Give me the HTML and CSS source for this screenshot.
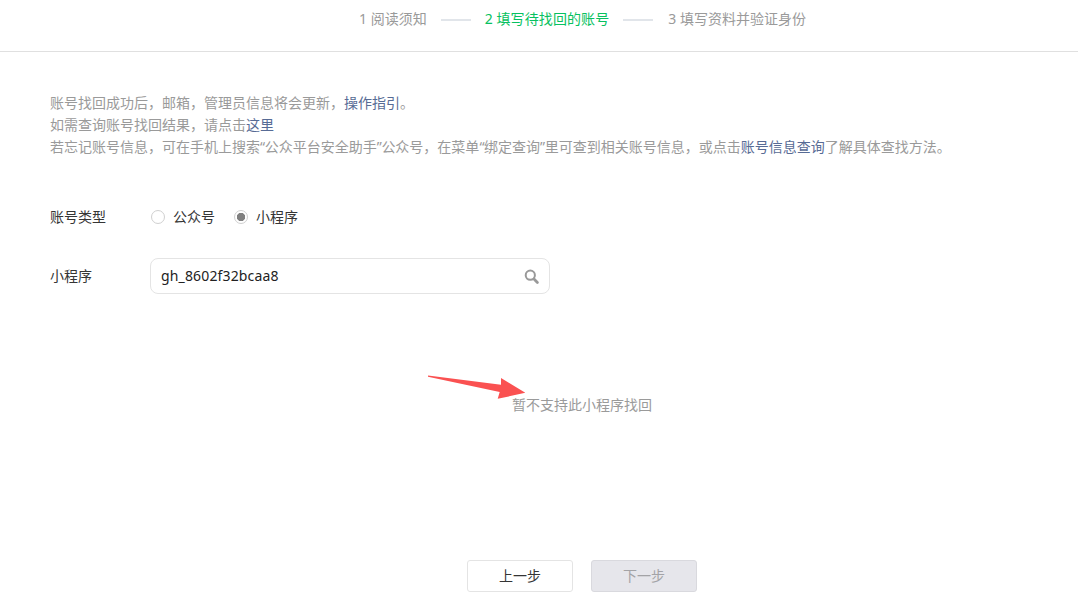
FILE: index.html
```html
<!DOCTYPE html>
<html lang="zh-CN">
<head>
<meta charset="utf-8">
<title>找回账号</title>
<link rel="stylesheet" href="styles.css">
</head>
<body>
<div class="steps">
  <span class="step">1 阅读须知</span>
  <span class="step-line"></span>
  <span class="step active">2 填写待找回的账号</span>
  <span class="step-line"></span>
  <span class="step">3 填写资料并验证身份</span>
</div>
<div class="content">
  <div class="tips">
    <p>账号找回成功后，邮箱，管理员信息将会更新，<a href="#">操作指引</a>。</p>
    <p>如需查询账号找回结果，请点击<a href="#">这里</a></p>
    <p>若忘记账号信息，可在手机上搜索<span class="quote">“</span>公众平台安全助手<span class="quote">”</span>公众号，在菜单<span class="quote">“</span>绑定查询<span class="quote">”</span>里可查到相关账号信息，或点击<a href="#">账号信息查询</a>了解具体查找方法。</p>
  </div>
  <form>
    <div class="form-row type-row">
      <span class="form-label">账号类型</span>
      <label class="radio"><input type="radio" name="type">公众号</label>
      <label class="radio"><input type="radio" name="type" checked>小程序</label>
    </div>
    <div class="form-row">
      <label class="form-label" for="account">小程序</label>
      <div class="search-box">
        <input type="text" id="account" value="gh_8602f32bcaa8">
        <svg class="search-icon" width="16" height="16" viewBox="0 0 16 16">
          <circle cx="6.3" cy="6.2" r="4.6" fill="none" stroke="#999" stroke-width="2"/>
          <path d="M10 10L13.4 13.4" stroke="#999" stroke-width="2.8" stroke-linecap="round"/>
        </svg>
      </div>
    </div>
    <div class="result">
      <span>暂不支持此小程序找回</span>
      <svg class="arrow" width="100" height="26" viewBox="0 0 100 26">
        <path d="M1 0.5L74 9.8L74 3L98.3 17.8L70.7 23.8L72.7 17L1 1.8Z" fill="#fa5151"/>
      </svg>
    </div>
    <div class="buttons">
      <button type="button" class="btn">上一步</button>
      <button type="button" class="btn btn-disabled" disabled>下一步</button>
    </div>
  </form>
</div>
</body>
</html>
```

FILE: styles.css
```css
body {
  margin: 0;
  background: #fff;
  color: #353535;
  font-family: "Noto Sans", "Noto Sans CJK SC", sans-serif;
  font-size: 14px;
  line-height: 22px;
  overflow: hidden;
}

.steps {
  display: flex;
  align-items: center;
  gap: 14px;
  box-sizing: border-box;
  height: 52px;
  padding: 0 0 12px 359px;
  border-bottom: 1px solid #e0e0e0;
  white-space: nowrap;
}

.step {
  padding-bottom: 2px;
  color: #9a9a9a;
}

.step.active {
  letter-spacing: 0.1px;
  color: #07c160;
}

.step-line {
  width: 30px;
  height: 2px;
  background: #e1e5ea;
}

.step-line + .step:last-child {
  margin-left: 1px;
}

.content {
  padding: 40px 50px 0;
}

.tips {
  color: #9a9a9a;
  white-space: nowrap;
}

.tips p {
  margin: 0;
}

.tips a {
  color: #576b95;
  text-decoration: none;
}

.quote {
  display: inline-block;
  width: 4.7px;
}

.form-row {
  display: flex;
  align-items: center;
  height: 36px;
}

.type-row {
  margin: 41px 0 23px;
}

.form-label {
  width: 100px;
}

.radio {
  display: flex;
  align-items: center;
  margin-right: 18px;
}

.radio input {
  appearance: none;
  box-sizing: border-box;
  width: 14px;
  height: 14px;
  margin: 0 8px 0 1px;
  border: 1px solid #d0d0d0;
  border-radius: 50%;
}

.radio input:checked {
  background: radial-gradient(circle, #808080 3.9px, transparent 4.5px);
}

.search-box {
  display: flex;
  align-items: center;
  box-sizing: border-box;
  width: 400px;
  height: 36px;
  padding: 0 9px 0 10px;
  border: 1px solid #e4e4e4;
  border-radius: 8px;
}

.search-box input {
  flex: 1;
  padding: 0 0 2px;
  border: none;
  outline: none;
  color: #222;
  background: transparent;
  font-family: inherit;
  font-size: 14px;
  letter-spacing: 0.15px;
}

.search-icon {
  margin-top: 2px;
}

.result {
  position: relative;
  width: 140px;
  margin: 100px 0 0 462px;
  color: #9a9a9a;
  white-space: nowrap;
}

/* red arrow over the result text */
.arrow {
  position: absolute;
  left: -85px;
  top: -19px;
}

.buttons {
  display: flex;
  gap: 18px;
  margin: 144px 0 0 417px;
}

.btn {
  box-sizing: border-box;
  width: 106px;
  height: 32px;
  padding: 0 0 2px;
  border: 1px solid #e4e4e4;
  border-radius: 3px;
  background: #fff;
  color: #353535;
  font-family: inherit;
  font-size: 14px;
}

.btn-disabled {
  background: #e6e6eb;
  border-color: #d9d9de;
  color: #a3a3a6;
}
```
